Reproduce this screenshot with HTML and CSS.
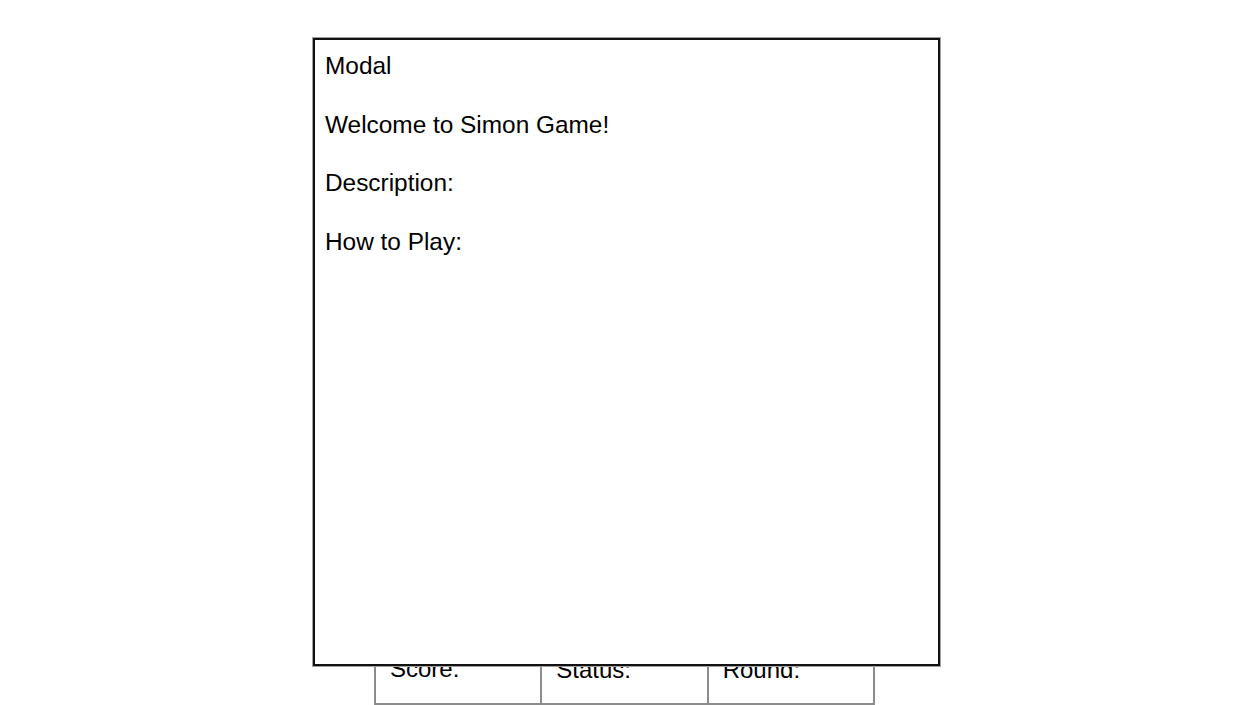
FILE: index.html
```html
<!DOCTYPE html>
<html>
<head>
<meta charset="utf-8">
<title>Simon Game</title>
<link rel="stylesheet" href="styles.css">
</head>
<body>
<main class="game">
  <div class="board"></div>
  <div class="scoreboard">
    <div class="cell cell-score">Score:</div>
    <div class="cell">Status:</div>
    <div class="cell">Round:</div>
  </div>
</main>
<div class="modal">
  <p class="line">Modal</p>
  <p class="line">Welcome to Simon Game!</p>
  <p class="line">Description:</p>
  <p class="line">How to Play:</p>
</div>
</body>
</html>
```
FILE: styles.css
```css
html, body {
  margin: 0;
  padding: 0;
  background: #ffffff;
  color: #000000;
  font-family: "Liberation Sans", Arial, sans-serif;
  font-size: 24px;
}

.game {
  display: flex;
  flex-direction: column;
  padding-left: 374px;
}

.board {
  height: 624px;
}

.scoreboard {
  display: grid;
  grid-template-columns: repeat(3, 1fr);
  width: 501px;
  height: 81px;
  box-sizing: border-box;
  border-right: 2px solid #8c8c8c;
  border-bottom: 2px solid #8c8c8c;
}

.cell {
  border-left: 2px solid #8c8c8c;
  display: flex;
  align-items: flex-end;
  padding: 0 0 19px 14px;
  line-height: 27.6px;
}

.cell-score {
  padding-bottom: 20px;
}

.modal {
  position: absolute;
  left: 313px;
  top: 38px;
  width: 627px;
  height: 628px;
  box-sizing: border-box;
  border: 2px solid #111111;
  box-shadow: 0 0 0 1px #a0a0a0;
  background: #ffffff;
  padding: 12px 10px;
  display: flex;
  flex-direction: column;
  gap: 31px;
  font-size: 24.4px;
}

.line {
  margin: 0;
  line-height: 27.6px;
}
```
